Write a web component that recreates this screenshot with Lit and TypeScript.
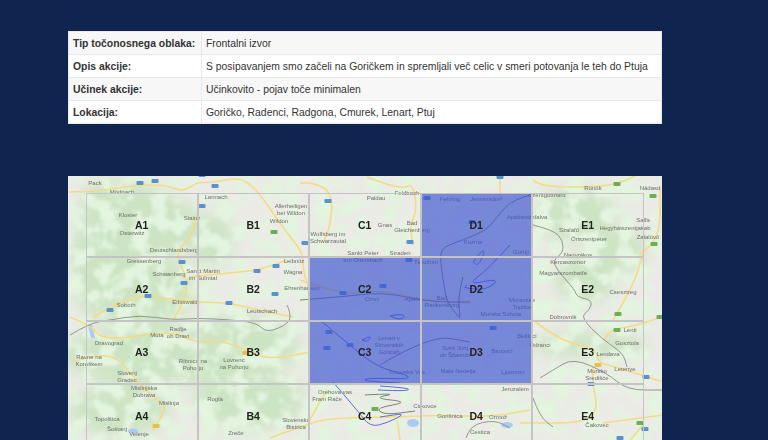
import { LitElement, css, html, svg } from "lit";
import { customElement } from "lit/decorators.js";

const ROWS = [
  ["Tip točonosnega oblaka:", "Frontalni izvor"],
  ["Opis akcije:", "S posipavanjem smo začeli na Goričkem in spremljali več celic v smeri potovanja le teh do Ptuja"],
  ["Učinek akcije:", "Učinkovito - pojav toče minimalen"],
  ["Lokacija:", "Goričko, Radenci, Radgona, Cmurek, Lenart, Ptuj"],
];

const COLS = ["A", "B", "C", "D", "E"];
const BLUE_CELLS = ["D1", "C2", "D2", "C3", "D3"];

// all map data below is in page coordinates, the svg viewBox takes care of the offset
const ROADS = [
  "69 192 93 192 137 185 167 185 183 192 197 182 210 183 240 177 257 190 273 213 287 233 303 253 303 270 310 293",
  "93 317 133 295 160 298 197 302 227 303 247 307 267 312 293 317",
  "197 213 193 237 177 250 180 263 188 283 183 303 173 320",
  "190 277 227 273 260 270 287 260",
  "70 317 90 325 103 340 147 335 173 332 197 343 217 340 240 347 267 360 310 352",
  "73 362 110 348 137 382 160 403 167 407 153 430",
  "270 438 310 423 333 418 397 417 440 415 490 417 530 410",
  "327 390 317 407 308 423",
  "397 420 400 440",
  "533 320 550 333 570 343 597 350 598 363 620 368 647 377 663 382",
  "593 367 592 383 598 407 587 423 520 423",
  "643 425 630 440",
  "603 423 663 415",
  "605 340 608 330 630 327 663 317",
  "533 180 540 187 597 187 620 183 637 175",
  "640 253 660 243 660 187",
  "613 320 633 287 643 253",
  "300 183 313 182 333 193 330 227 323 243",
  "367 177 400 190 413 183 417 210 410 225 413 245",
  "300 280 340 295 383 290 420 300 470 303",
  "500 177 500 195",
];

const BORDERS = [
  "70 335 90 323 110 320 140 315 173 320 197 318 233 320 257 323 267 333 290 323 290 312 287 305",
  "533 225 553 230 563 240 563 253 553 260 557 270 575 290 577 297 592 300 590 310 580 317 603 340 623 353 627 367",
  "540 378 553 370 573 358 607 373 627 390 663 390",
  "533 398 540 417 553 427",
  "466 438 470 425 495 420 510 428",
];

// darker lines that show through the blue cells
const BLUE_BORDERS = [
  "530 195 513 200 500 213 487 230 463 240 443 247 440 257 443 280 447 303 460 318",
  "463 277 458 295 460 317",
  "300 300 340 297 383 292 430 302 470 302",
  "380 365 430 335 470 342",
  "365 395 400 393 372 398 410 402 375 408 385 415 415 411",
];

const TRACKS = [
  "320 320 347 343 377 367 407 375 410 379 367 378 363 381 400 383",
  "333 382 357 410 370 427 387 423 407 413 380 417",
  "380 386 410 388 407 391 378 390",
  "473 262 482 250 485 252 478 266 473 262",
  "510 245 487 270 467 285 500 278 487 290 463 288 467 285",
  "390 316 400 314 406 316 400 320 390 316",
  "362 340 372 335 368 342 362 340",
];

const PLACES: [string, number, number][] = [
  ["Pack", 95, 183], ["Mödriach", 122, 192], ["Kloster", 128, 215], ["Osterwitz", 132, 233],
  ["Stainz", 192, 218], ["Deutschlandsberg", 174, 250], ["Lannach", 216, 197],
  ["Allerheiligen", 291, 206], ["bei Wildon", 291, 213], ["Wildon", 279, 221],
  ["Gressenberg", 144, 261], ["Schwanberg", 169, 274], ["Sankt Martin", 203, 271], ["im Sulmtal", 203, 278],
  ["Soboth", 126, 305], ["Eibiswald", 185, 302], ["Leibnitz", 294, 261], ["Wagna", 293, 272],
  ["Ehrenhausen", 302, 288], ["Leutschach", 262, 311], ["Paldau", 376, 198], ["Feldbach", 407, 193],
  ["Gnas", 385, 225], ["Bad", 412, 223], ["Gleichenberg", 412, 230], ["Wolfsberg im", 328, 234],
  ["Schwarzautal", 328, 241], ["Sankt Peter", 363, 253], ["Straden", 400, 253], ["Fehring", 450, 199],
  ["Jennersdorf", 486, 199], ["Apátistvánfalva", 527, 217], ["Kuzma", 473, 242], ["Gornji", 521, 252],
  ["am Ottersbach", 363, 260], ["Tieschen", 426, 262], ["Crnci", 372, 299], ["Apače", 413, 299],
  ["Bad", 442, 298], ["Radkersburg", 442, 305], ["Murska Sobota", 501, 314], ["Moravske", 522, 300],
  ["Toplice", 522, 307], ["Rönök", 593, 188], ["Szentgotthárd", 547, 195], ["Nádasd", 650, 188],
  ["Szalafő", 569, 230], ["Őriszentpéter", 589, 239], ["Hegyhátszentjakab", 625, 228], ["Salfa", 643, 220],
  ["Zalalövő", 648, 237], ["Nagyrákos", 578, 255], ["Kercaszomor", 568, 262], ["Magyarszombatfa", 563, 273],
  ["Csesztreg", 623, 292], ["Dobrovnik", 563, 317], ["Muta", 157, 335], ["Radlje", 178, 329],
  ["ob Dravi", 178, 336], ["Dravograd", 109, 343], ["Ravne na", 89, 357], ["Koroškem", 89, 364],
  ["Slovenj", 127, 373], ["Gradec", 127, 380], ["Ribnica na", 193, 361], ["Pohorju", 193, 368],
  ["Lovrenc", 234, 360], ["na Pohorju", 234, 367], ["Mislinjska", 144, 388], ["Dobrava", 144, 395],
  ["Mislinja", 169, 403], ["Rogla", 215, 399], ["Topolšica", 107, 419], ["Šoštanj", 117, 429],
  ["Velenje", 139, 434], ["Slovenska", 296, 420], ["Bistrica", 296, 427], ["Zreče", 236, 433],
  ["Lenart v", 389, 338], ["Slovenskih", 389, 345], ["Goricah", 389, 352], ["Sveti Jurij", 455, 348],
  ["ob Ščavnici", 455, 355], ["Mala Nedelja", 458, 371], ["Beltinci", 527, 336], ["Ljutomer", 513, 372],
  ["Banovci", 502, 351], ["Trnovska Vas", 407, 372], ["Orehova vas", 335, 392], ["Fram Rače", 327, 399],
  ["Cirkovce", 425, 406], ["Gorišnica", 450, 416], ["Ormož", 498, 417], ["Cestica", 480, 432],
  ["Jeruzalem", 515, 389], ["Lendava", 608, 354], ["Gosztola", 627, 343], ["Lenti", 630, 330],
  ["Mursko", 597, 371], ["Središće", 597, 378], ["Odranci", 540, 345], ["Čakovec", 597, 425], ["Letenye", 625, 369],
];

const BLUE_SIGNS = [
  [140, 183], [155, 181], [215, 186], [202, 175], [202, 206], [305, 243], [182, 262], [184, 283], [148, 296],
  [110, 310], [257, 271], [276, 266], [275, 294], [229, 303], [328, 201], [410, 242], [500, 177], [409, 260],
  [383, 286], [343, 293], [427, 198], [472, 222], [329, 332], [350, 345], [327, 348], [493, 328], [646, 377],
  [591, 384], [645, 429], [620, 438],
];
const GREEN_SIGNS = [
  [274, 232], [375, 409], [617, 184], [653, 196], [654, 244], [618, 314], [617, 330], [660, 317], [640, 423],
];
const YELLOW_SIGNS = [[598, 365], [156, 426], [246, 353]];

const HILLS = [
  [140, 225, 60, 34], [135, 290, 62, 36], [160, 355, 100, 30], [120, 410, 50, 26], [240, 345, 60, 30],
  [250, 400, 55, 30], [120, 200, 40, 20], [95, 260, 24, 50], [210, 240, 24, 26], [575, 215, 40, 26],
  [620, 250, 26, 22], [585, 280, 30, 24], [590, 345, 60, 12],
];

// turns "x y x y ..." into a smooth path through the midpoints
const smooth = (pts: string) => {
  const n = pts.split(" ").map(Number);
  let d = `M${n[0]} ${n[1]}`;
  for (let i = 2; i < n.length - 2; i += 2) {
    d += `Q${n[i]} ${n[i + 1]} ${(n[i] + n[i + 2]) / 2} ${(n[i + 1] + n[i + 3]) / 2}`;
  }
  return `${d}L${n[n.length - 2]} ${n[n.length - 1]}`;
};

const sign = (p: number[], cls: string) =>
  svg`<rect class=${cls} x=${p[0] - 3.5} y=${p[1] - 2} width="7" height="4" rx="1"></rect>`;

@customElement("app-root")
export class AppRoot extends LitElement {
  static styles = css`
    :host {
      display: block;
      height: 440px;
      overflow: hidden;
      background: #0f2550;
      font-family: "Liberation Sans", Arial, sans-serif;
    }
    .page {
      display: flex;
      flex-direction: column;
      gap: 52px;
      width: 594px;
      padding: 31px 0 0 68px;
    }
    table {
      width: 594px;
      border-collapse: collapse;
      background: #fff;
      font-size: 10.4px;
      line-height: 14px;
      color: #333;
    }
    th,
    td {
      padding: 5px 4px 3px;
      border: 1px solid #e8e8e8;
      text-align: left;
      white-space: nowrap;
    }
    th {
      width: 124px;
      font-weight: bold;
    }
    tr:nth-child(odd) {
      background: #f7f7f7;
    }
    .map {
      position: relative;
      height: 300px;
      overflow: hidden;
    }
    .map svg {
      display: block;
      width: 594px;
      height: 300px;
    }
    .land {
      fill: #ebebe6;
    }
    .hills {
      opacity: 0.75;
    }
    .hill {
      fill: #c2e2b8;
    }
    .road {
      fill: none;
      stroke: #f5da86;
      stroke-width: 1.6;
      stroke-linejoin: round;
    }
    .border {
      fill: none;
      stroke: #8c8c84;
      stroke-width: 0.9;
    }
    .blue-border {
      fill: none;
      stroke: #7d8078;
      stroke-width: 1;
    }
    .track {
      fill: none;
      stroke: #5f6bdc;
      stroke-width: 1;
    }
    .water {
      fill: #a9cdf0;
    }
    .place {
      font-size: 6px;
      fill: #6e6e68;
      text-anchor: middle;
    }
    .sign-blue {
      fill: #5b8fd2;
    }
    .sign-green {
      fill: #6cae58;
    }
    .sign-yellow {
      fill: #e8bf4c;
    }
    .grid {
      position: absolute;
      left: 18px;
      top: 17px;
      display: grid;
      grid-template-columns: repeat(5, 111.5px);
      grid-auto-rows: 63.75px;
      filter: blur(0.35px);
    }
    .cell {
      display: flex;
      align-items: center;
      justify-content: center;
      box-sizing: border-box;
      border: 0.75px solid #c4c4c4;
      font-size: 10.5px;
      font-weight: bold;
      color: #222;
    }
    .cell.on {
      background: rgba(60, 82, 210, 0.66);
    }
  `;

  render() {
    const cells = [1, 2, 3, 4].flatMap((row) => COLS.map((col) => `${col}${row}`));
    return html`
      <div class="page">
        <table>
          <tbody>
            ${ROWS.map((r) => html`<tr><th>${r[0]}</th><td>${r[1]}</td></tr>`)}
          </tbody>
        </table>
        <div class="map">
          <svg viewBox="68 176 594 300">
            <defs>
              <filter id="mottle" x="0" y="0" width="100%" height="100%">
                <feTurbulence type="fractalNoise" baseFrequency="0.06" numOctaves="3" seed="7"></feTurbulence>
                <feColorMatrix
                  type="matrix"
                  values="0 0 0 0 0.77  0 0 0 0 0.9  0 0 0 0 0.74  0 6 0 0 -2.7"
                ></feColorMatrix>
                <feGaussianBlur stdDeviation="1.2"></feGaussianBlur>
              </filter>
              <filter id="soft"><feGaussianBlur stdDeviation="8"></feGaussianBlur></filter>
              <filter id="fine"><feGaussianBlur stdDeviation="0.6"></feGaussianBlur></filter>
            </defs>
            <rect class="land" x="68" y="176" width="594" height="300"></rect>
            <g class="hills" filter="url(#soft)">
              ${HILLS.map((h) => svg`<ellipse class="hill" cx=${h[0]} cy=${h[1]} rx=${h[2]} ry=${h[3]}></ellipse>`)}
            </g>
            <rect x="68" y="176" width="594" height="300" filter="url(#mottle)"></rect>
            <g filter="url(#fine)">
              <ellipse class="water" cx="133" cy="431" rx="5" ry="2.5"></ellipse>
              <ellipse class="water" cx="413" cy="423" rx="6" ry="4"></ellipse>
              <ellipse class="water" cx="507" cy="425" rx="6" ry="3"></ellipse>
              <path class="water" d="M88 325L92 325L95 338L91 338Z"></path>
              ${ROADS.map((p) => svg`<path class="road" d=${smooth(p)}></path>`)}
              ${BORDERS.map((p) => svg`<path class="border" d=${smooth(p)}></path>`)}
              ${BLUE_BORDERS.map((p) => svg`<path class="blue-border" d=${smooth(p)}></path>`)}
              ${TRACKS.map((p) => svg`<path class="track" d=${smooth(p)}></path>`)}
              ${BLUE_SIGNS.map((p) => sign(p, "sign-blue"))}
              ${GREEN_SIGNS.map((p) => sign(p, "sign-green"))}
              ${YELLOW_SIGNS.map((p) => sign(p, "sign-yellow"))}
              ${PLACES.map((p) => svg`<text class="place" x=${p[1]} y=${p[2] + 2}>${p[0]}</text>`)}
            </g>
          </svg>
          <div class="grid">
            ${cells.map((c) => html`<div class="cell ${BLUE_CELLS.includes(c) ? "on" : ""}">${c}</div>`)}
          </div>
        </div>
      </div>
    `;
  }
}
